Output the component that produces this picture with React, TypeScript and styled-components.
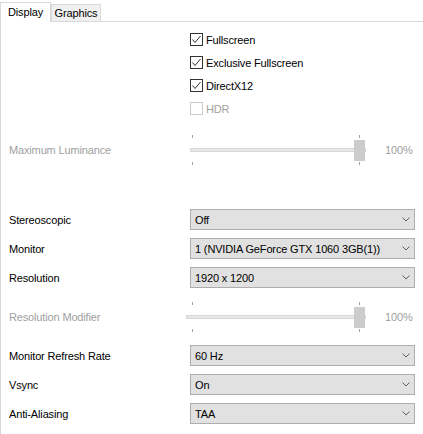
import React from "react";
import styled, { createGlobalStyle } from "styled-components";

const GlobalStyle = createGlobalStyle`
  html, body { margin: 0; padding: 0; background: #ffffff; }
  body {
    font-family: "Liberation Sans", Arial, sans-serif;
    font-size: 11px;
    letter-spacing: -0.15px;
    color: #000000;
  }
  * { box-sizing: border-box; }
`;

const Page = styled.div`
  width: 423px;
  height: 434px;
  overflow: hidden;
  background: #ffffff;
`;

const TabStrip = styled.div`
  display: flex;
  align-items: flex-end;
  height: 22px;
`;

const Tab = styled.div<{ $active?: boolean; $w: number }>`
  width: ${(p) => p.$w}px;
  height: ${(p) => (p.$active ? 20 : 18)}px;
  display: flex;
  align-items: center;
  justify-content: center;
  border: 1px solid #d9d9d9;
  border-bottom: ${(p) => (p.$active ? "none" : "1px solid #d9d9d9")};
  background: ${(p) => (p.$active ? "#ffffff" : "#f0f0f0")};
  padding-bottom: ${(p) => (p.$active ? 1 : 0)}px;
`;

const TabFiller = styled.div`
  flex: 1;
  height: 1px;
  background: #d9d9d9;
`;

const Panel = styled.div`
  height: 412px;
  border-left: 1px solid #d9d9d9;
  padding: 11px 0 0 8px;
  display: flex;
  flex-direction: column;
`;

const CheckGroup = styled.div`
  margin-left: 181px;
  display: flex;
  flex-direction: column;
  gap: 10px;
`;

const CheckRow = styled.div<{ $disabled?: boolean }>`
  display: flex;
  align-items: center;
  height: 13px;
  gap: 3px;
  color: ${(p) => (p.$disabled ? "#a3a3a3" : "#000000")};
`;

const Box = styled.div<{ $disabled?: boolean }>`
  width: 13px;
  height: 13px;
  border: 1px solid ${(p) => (p.$disabled ? "#cccccc" : "#333333")};
  background: #ffffff;
  display: flex;
  align-items: center;
  justify-content: center;
`;

const Row = styled.div<{ $mt?: number; $h: number }>`
  display: flex;
  align-items: center;
  height: ${(p) => p.$h}px;
  margin-top: ${(p) => p.$mt ?? 0}px;
`;

const Label = styled.div<{ $w: number; $disabled?: boolean }>`
  width: ${(p) => p.$w}px;
  flex-shrink: 0;
  color: ${(p) => (p.$disabled ? "#a0a0a0" : "#000000")};
  white-space: nowrap;
`;

const Percent = styled.div`
  margin-left: 18px;
  color: #a0a0a0;
`;

const Combo = styled.div`
  width: 225px;
  height: 21px;
  border: 1px solid #adadad;
  background: #e1e1e1;
  display: flex;
  align-items: center;
  justify-content: space-between;
  padding: 0 4px 0 4px;
  white-space: nowrap;
`;

const Check = () => (
  <svg width="11" height="11" viewBox="0 0 11 11">
    <path d="M1.5 5.5 L4 8.5 L9.5 2" fill="none" stroke="#333333" strokeWidth="1" />
  </svg>
);

const CheckItem = ({ label, checked, disabled }: { label: string; checked?: boolean; disabled?: boolean }) => (
  <CheckRow $disabled={disabled}>
    <Box $disabled={disabled}>{checked && <Check />}</Box>
    <span>{label}</span>
  </CheckRow>
);

const Chevron = () => (
  <svg width="8" height="5" viewBox="0 0 8 5">
    <path d="M0.5 0.5 L4 4 L7.5 0.5" fill="none" stroke="#606060" strokeWidth="1" />
  </svg>
);

const ComboRow = ({ label, value, mt }: { label: string; value: string; mt?: number }) => (
  <Row $h={21} $mt={mt}>
    <Label $w={181}>{label}</Label>
    <Combo>
      <span>{value}</span>
      <Chevron />
    </Combo>
  </Row>
);

const SliderGraphic = ({ start }: { start: number }) => (
  <svg width="181" height="32" viewBox="0 0 181 32">
    <rect x={start + 0.5} y="14.5" width={179 - start} height="3" fill="#e7e7e7" stroke="#d8d8d8" />
    <line x1="6.5" y1="1" x2="6.5" y2="4" stroke="#a0a0a0" />
    <line x1="173.5" y1="1" x2="173.5" y2="4" stroke="#a0a0a0" />
    <line x1="6.5" y1="28" x2="6.5" y2="31" stroke="#a0a0a0" />
    <line x1="173.5" y1="28" x2="173.5" y2="31" stroke="#a0a0a0" />
    <rect x="168" y="6" width="11" height="21" fill="#cccccc" />
  </svg>
);

const SliderRow = ({ label, start, mt }: { label: string; start: number; mt?: number }) => (
  <Row $h={32} $mt={mt}>
    <Label $w={177} $disabled>
      {label}
    </Label>
    <SliderGraphic start={start} />
    <Percent>100%</Percent>
  </Row>
);

export default function App() {
  return (
    <Page>
      <GlobalStyle />
      <TabStrip>
        <Tab $active $w={51}>Display</Tab>
        <Tab $w={50}>Graphics</Tab>
        <TabFiller />
      </TabStrip>
      <Panel>
        <CheckGroup>
          <CheckItem label="Fullscreen" checked />
          <CheckItem label="Exclusive Fullscreen" checked />
          <CheckItem label="DirectX12" checked />
          <CheckItem label="HDR" disabled />
        </CheckGroup>
        <SliderRow label="Maximum Luminance" start={4} mt={19} />
        <ComboRow label="Stereoscopic" value="Off" mt={43} />
        <ComboRow label="Monitor" value="1 (NVIDIA GeForce GTX 1060 3GB(1))" mt={8} />
        <ComboRow label="Resolution" value="1920 x 1200" mt={8} />
        <SliderRow label="Resolution Modifier" start={0} mt={13} />
        <ComboRow label="Monitor Refresh Rate" value="60 Hz" mt={12} />
        <ComboRow label="Vsync" value="On" mt={8} />
        <ComboRow label="Anti-Aliasing" value="TAA" mt={8} />
      </Panel>
    </Page>
  );
}
